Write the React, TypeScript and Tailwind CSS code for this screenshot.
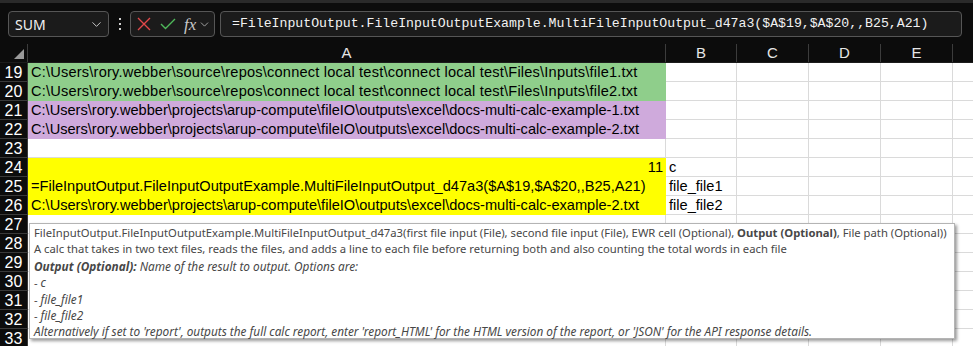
import { ChevronDown } from "lucide-react";

const rows = [
  { n: 19, a: "C:\\Users\\rory.webber\\source\\repos\\connect local test\\connect local test\\Files\\Inputs\\file1.txt", bg: "bg-[#8fce8b] tracking-[0.2px]" },
  { n: 20, a: "C:\\Users\\rory.webber\\source\\repos\\connect local test\\connect local test\\Files\\Inputs\\file2.txt", bg: "bg-[#8fce8b] tracking-[0.2px]" },
  { n: 21, a: "C:\\Users\\rory.webber\\projects\\arup-compute\\fileIO\\outputs\\excel\\docs-multi-calc-example-1.txt", bg: "bg-[#cfaadc]" },
  { n: 22, a: "C:\\Users\\rory.webber\\projects\\arup-compute\\fileIO\\outputs\\excel\\docs-multi-calc-example-2.txt", bg: "bg-[#cfaadc]" },
  { n: 23, a: "", bg: "" },
  { n: 24, a: "11", bg: "bg-[#ffff00]", right: true, b: "c" },
  { n: 25, a: "=FileInputOutput.FileInputOutputExample.MultiFileInputOutput_d47a3($A$19,$A$20,,B25,A21)", bg: "bg-[#ffff00]", b: "file_file1" },
  { n: 26, a: "C:\\Users\\rory.webber\\projects\\arup-compute\\fileIO\\outputs\\excel\\docs-multi-calc-example-2.txt", bg: "bg-[#ffff00]", b: "file_file2" },
  { n: 27, a: "", bg: "" },
  { n: 28, a: "", bg: "" },
  { n: 29, a: "", bg: "" },
  { n: 30, a: "", bg: "" },
  { n: 31, a: "", bg: "" },
  { n: 32, a: "", bg: "" },
  { n: 33, a: "", bg: "" },
];

const cols = [
  { l: "B", w: "w-[71px]" },
  { l: "C", w: "w-[72px]" },
  { l: "D", w: "w-[72px]" },
  { l: "E", w: "w-[72px]" },
];

export default function App() {
  return (
    <div className="relative h-[346px] w-[973px] overflow-hidden bg-[#0c0c0c] font-['Liberation_Sans',Arial,sans-serif]">
      <div className="h-[3px] bg-[#2a2a2a]" />

      {/* formula bar */}
      <div className="mt-[8px] flex h-[26px] items-center">
        <div className="ml-[8px] flex h-[26px] w-[101px] items-center justify-between rounded-[4px] border border-[#565656] bg-[#1b1b1b] pl-[6px] pr-[4px] font-['Noto_Sans',sans-serif] text-[14px] text-[#f2f2f2]">
          <span>SUM</span>
          <ChevronDown size={15} strokeWidth={1.5} className="text-[#cfcfcf]" />
        </div>
        <div className="ml-[9px] flex w-[4px] flex-col items-center gap-[3px]">
          <span className="h-[2px] w-[2px] bg-[#cfcfcf]" />
          <span className="h-[2px] w-[2px] bg-[#cfcfcf]" />
          <span className="h-[2px] w-[2px] bg-[#cfcfcf]" />
        </div>
        <div className="ml-[8px] flex h-[26px] w-[85px] items-center rounded-[4px] border border-[#565656] bg-[#1b1b1b]">
          <svg width="14" height="14" viewBox="0 0 14 14" className="ml-[6px]">
            <path d="M1 1L13 13M13 1L1 13" stroke="#e0484a" strokeWidth="1.4" />
          </svg>
          <svg width="16" height="12" viewBox="0 0 16 12" className="ml-[9px]">
            <path d="M1 6L5.5 10.5L15 1" stroke="#4fb95a" strokeWidth="1.4" fill="none" />
          </svg>
          <span className="ml-[8px] font-['Liberation_Serif',serif] text-[17px] italic leading-none text-[#c8c8c8]">fx</span>
          <ChevronDown size={13} strokeWidth={1.5} className="ml-[2px] text-[#bdbdbd]" />
        </div>
        <div className="ml-[5px] flex h-[26px] w-[742px] items-center rounded-[4px] border border-[#565656] bg-[#1b1b1b] pl-[11px] font-['Liberation_Mono',monospace] text-[13.2px] text-[#f2f2f2]">
          =FileInputOutput.FileInputOutputExample.MultiFileInputOutput_d47a3($A$19,$A$20,,B25,A21)
        </div>
      </div>

      {/* column headers */}
      <div className="mt-[7px] flex h-[18px] text-[15px] text-[#e6e6e6]">
        <div className="relative w-[28px] border-r border-[#3c3c3c]">
          <svg width="10" height="10" viewBox="0 0 10 10" className="absolute bottom-[3px] right-[3px]">
            <path d="M10 0L10 10L0 10Z" fill="#9a9a9a" />
          </svg>
        </div>
        <div className="flex w-[638px] items-center justify-center border-r border-[#3c3c3c]">A</div>
        {cols.map((c) => (
          <div key={c.l} className={`flex ${c.w} items-center justify-center border-r border-[#3c3c3c]`}>
            {c.l}
          </div>
        ))}
        <div className="flex-1" />
      </div>

      {/* grid */}
      <div className="border-t border-[#1c1c1c]">
        {rows.map((r) => (
          <div key={r.n} className="flex h-[19px] text-[14.6px] leading-[19px]">
            <div className="flex w-[28px] items-center justify-center border-b border-r border-[#3a3a3a] bg-[#0c0c0c] text-[16px] text-white">
              {r.n}
            </div>
            <div
              className={`w-[638px] overflow-hidden whitespace-nowrap px-[3px] text-black ${
                r.bg ? `${r.bg}` : "border-b border-r border-[#dadada] bg-white"
              } ${r.right ? "text-right" : ""}`}
            >
              {r.a}
            </div>
            <div className="w-[71px] whitespace-nowrap border-b border-r border-[#dadada] bg-white pl-[3px] text-black">
              {r.b ?? ""}
            </div>
            {cols.slice(1).map((c) => (
              <div key={c.l} className={`${c.w} border-b border-r border-[#dadada] bg-white`} />
            ))}
            <div className="flex-1 border-b border-[#dadada] bg-white" />
          </div>
        ))}
      </div>

      {/* function tooltip */}
      <div className="absolute left-[29px] top-[223px] h-[116px] w-[926px] border border-[#b4b4b4] bg-white px-[4px] pt-[1px] font-['Noto_Sans',sans-serif] text-[11.25px] leading-[16.4px] text-[#474747] shadow-[2px_2px_3px_rgba(0,0,0,0.4)]">
        <div className="h-[16.4px] whitespace-nowrap">
          FileInputOutput.FileInputOutputExample.MultiFileInputOutput_d47a3(first file input (File), second file input (File), EWR cell (Optional),{" "}
          <b>Output (Optional)</b>, File path (Optional))
        </div>
        <div className="h-[16.4px] whitespace-nowrap">
          A calc that takes in two text files, reads the files, and adds a line to each file before returning both and also counting the total words in each file
        </div>
        <div className="h-[16.4px] whitespace-nowrap text-[11.8px] italic">
          <b>Output (Optional):</b> Name of the result to output. Options are:
        </div>
        <div className="h-[16.4px]">
          - <i className="text-[11.8px]">c</i>
        </div>
        <div className="h-[16.4px]">
          - <i className="text-[11.8px]">file_file1</i>
        </div>
        <div className="h-[16.4px]">
          - <i className="text-[11.8px]">file_file2</i>
        </div>
        <div className="h-[16.4px] whitespace-nowrap text-[11.8px] italic">
          Alternatively if set to 'report', outputs the full calc report, enter 'report_HTML' for the HTML version of the report, or 'JSON' for the API response details.
        </div>
      </div>
    </div>
  );
}
